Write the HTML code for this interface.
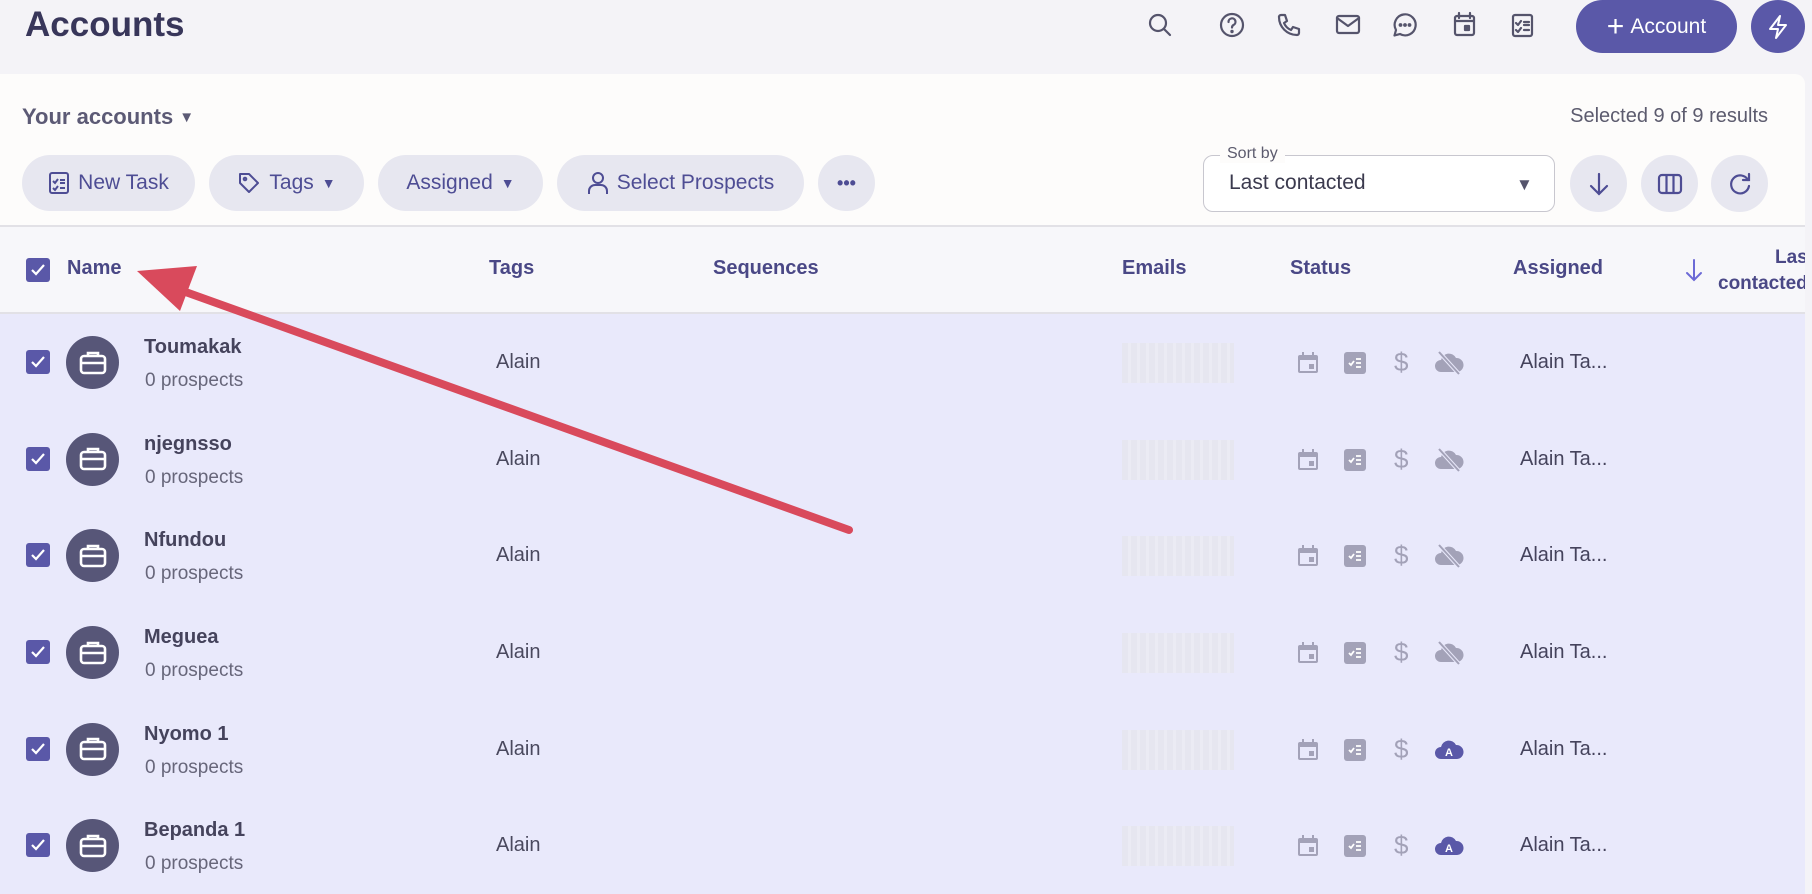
<!DOCTYPE html>
<html><head><meta charset="utf-8"><style>
*{margin:0;padding:0;box-sizing:border-box}
body{width:1812px;height:894px;overflow:hidden;background:#f4f3f7;font-family:"Liberation Sans",sans-serif;position:relative;color:#3d3b57}
.a{position:absolute}
.pill{position:absolute;top:155px;height:56px;border-radius:28px;background:#e7e7f0;color:#4e4d94;font-size:21px;display:flex;align-items:center;justify-content:center;gap:8px}
.circ{position:absolute;top:155px;width:57px;height:57px;border-radius:50%;background:#e7e7f0;display:flex;align-items:center;justify-content:center}
.th{position:absolute;top:257px;font-size:20px;font-weight:bold;color:#4a4886}
.cb{position:absolute;width:24px;height:24px;border-radius:3px;background:#5a58a8;display:flex;align-items:center;justify-content:center}
.row{position:absolute;left:0;width:1805px;height:97px;background:#e9e9fb}
.av{position:absolute;left:66px;top:22px;width:53px;height:53px;border-radius:50%;background:#575678;display:flex;align-items:center;justify-content:center}
.nm{position:absolute;left:144px;top:22px;font-size:20px;font-weight:bold;color:#45435c}
.pr{position:absolute;left:145px;top:56px;font-size:19px;color:#67667a}
.tg{position:absolute;left:496px;top:37px;font-size:20px;color:#4a495e}
.em{position:absolute;left:1122px;top:29px;width:112px;height:40px;background:repeating-linear-gradient(90deg,#e6e6f0 0 6px,#ebebf4 6px 9px)}
.st{position:absolute;top:37px}
.as{position:absolute;left:1520px;top:37px;font-size:20px;color:#45435c}
</style></head><body>
<div class="a" style="left:25px;top:5px;font-size:35px;font-weight:bold;color:#38365a">Accounts</div>
<svg class="a" style="left:1148px;top:11px" width="400" height="30" viewBox="0 0 400 30" fill="none" stroke="#55546c" stroke-width="2.2" stroke-linecap="round" stroke-linejoin="round">
<circle cx="10" cy="12" r="8"/><path d="M16 18l6 6"/>
<circle cx="84" cy="14" r="11"/><path d="M80.5 11a3.5 3.5 0 1 1 5 3c-1 .6-1.5 1.2-1.5 2.5"/><circle cx="84" cy="20.5" r=".6" fill="#55546c"/>
<path d="M133 4h4l2 6-3 2a13 13 0 0 0 7 7l2-3 6 2v4a2 2 0 0 1-2 2A18 18 0 0 1 131 6a2 2 0 0 1 2-2z"/>
<rect x="189" y="5" width="22" height="17" rx="2"/><path d="M189 7l11 8 11-8"/>
<path d="M252 23A10.5 10.5 0 1 0 248 19L246.5 24.5Z"/><circle cx="252.5" cy="14" r=".8" fill="#55546c"/><circle cx="257" cy="14" r=".8" fill="#55546c"/><circle cx="261.5" cy="14" r=".8" fill="#55546c"/>
<rect x="307" y="5" width="19" height="19" rx="2"/><path d="M307 10h19M311 2v5M322 2v5"/><rect x="317" y="15" width="4" height="4" fill="#55546c"/>
<rect x="365" y="4" width="19" height="21" rx="2"/><path d="M368 12l2 2 3-4M376 11h5M376 14h5M368 19l2 2 3-4M376 19h5"/>
</svg>
<div class="a" style="left:1576px;top:0;width:161px;height:53px;border-radius:27px;background:#5a58a8;color:#fff;font-size:21px;display:flex;align-items:center;justify-content:center;gap:6px"><span style="font-size:30px;font-weight:300;line-height:1">+</span>Account</div>
<div class="a" style="left:1751px;top:0;width:54px;height:53px;border-radius:50%;background:#5a58a8;display:flex;align-items:center;justify-content:center"><svg width="24" height="26" viewBox="0 0 24 26" fill="none" stroke="#fff" stroke-width="2" stroke-linejoin="round"><path d="M14 2L4 15h8l-2 9 10-13h-8z"/></svg></div>
<div class="a" style="left:0;top:74px;width:1805px;height:820px;background:#fdfcfb;border-top-right-radius:10px"></div>
<div class="a" style="left:22px;top:104px;font-size:22px;font-weight:bold;color:#5c5a75">Your accounts <span style="font-size:15px;vertical-align:2px">▼</span></div>
<div class="a" style="right:44px;top:105px;font-size:20px;color:#5c5b6e">Selected 9 of 9 results</div>
<div class="pill" style="left:22px;width:173px"><svg width="22" height="24" viewBox="0 0 22 24" fill="none" stroke="#4e4d94" stroke-width="2"><rect x="2" y="2" width="18" height="20" rx="2"/><path d="M5 10l2 2 3-4M12 9h5M12 12h5M5 17l2 2 3-4M12 17h5"/></svg>New Task</div>
<div class="pill" style="left:209px;width:155px"><svg width="24" height="24" viewBox="0 0 24 24" fill="none" stroke="#4e4d94" stroke-width="2" stroke-linejoin="round"><path d="M3 3h9l9 9-9 9-9-9z"/><circle cx="8" cy="8" r="1.3"/></svg>Tags <span style="font-size:14px">▼</span></div>
<div class="pill" style="left:378px;width:165px">Assigned <span style="font-size:14px">▼</span></div>
<div class="pill" style="left:557px;width:247px"><svg width="22" height="24" viewBox="0 0 22 24" fill="none" stroke="#4e4d94" stroke-width="2"><circle cx="11" cy="7" r="5"/><path d="M2 23v-3a6 6 0 0 1 6-6h6a6 6 0 0 1 6 6v3"/></svg>Select Prospects</div>
<div class="pill" style="left:818px;width:57px;font-weight:bold;font-size:18px">•••</div>
<div class="a" style="left:1203px;top:155px;width:352px;height:57px;border:1.5px solid #c8c7cf;border-radius:10px;background:#fff"></div>
<div class="a" style="left:1220px;top:145px;padding:0 7px;background:#fdfcfb;font-size:16px;color:#5c5b6e">Sort by</div>
<div class="a" style="left:1229px;top:171px;font-size:21px;color:#3b3a4e">Last contacted</div>
<div class="a" style="left:1516px;top:175px;font-size:17px;color:#55546c">▼</div>
<div class="circ" style="left:1570px"><svg width="24" height="26" viewBox="0 0 24 26" fill="none" stroke="#4e4d94" stroke-width="2.2" stroke-linecap="round"><path d="M12 3v20M4 15l8 8 8-8"/></svg></div>
<div class="circ" style="left:1641px"><svg width="26" height="24" viewBox="0 0 26 24" fill="none" stroke="#4e4d94" stroke-width="2.2"><rect x="2" y="3" width="22" height="18" rx="3"/><path d="M9.5 3v18M16.5 3v18"/></svg></div>
<div class="circ" style="left:1711px"><svg width="26" height="26" viewBox="0 0 26 26" fill="none" stroke="#4e4d94" stroke-width="2.2" stroke-linecap="round"><path d="M21 9a9 9 0 1 0 1 6"/><path d="M22 3v6h-6"/></svg></div>
<div class="a" style="left:0;top:225px;width:1805px;height:89px;background:#f7f7fa;border-top:2px solid #e2e1e6;border-bottom:2px solid #e2e1e6"></div>
<div class="cb" style="left:26px;top:258px"><svg width="16" height="14" viewBox="0 0 16 14" fill="none" stroke="#fff" stroke-width="2.2"><path d="M2 7l4 4 8-9"/></svg></div>
<div class="th" style="left:67px">Name</div>
<div class="th" style="left:489px">Tags</div>
<div class="th" style="left:713px">Sequences</div>
<div class="th" style="left:1122px">Emails</div>
<div class="th" style="left:1290px">Status</div>
<div class="th" style="left:1513px">Assigned</div>
<svg class="a" style="left:1684px;top:257px" width="20" height="26" viewBox="0 0 20 26" fill="none" stroke="#6c6ad6" stroke-width="2" stroke-linecap="round"><path d="M10 3v20M3 16l7 7 7-7"/></svg>
<div class="a" style="left:1718px;top:245px;font-size:19px;font-weight:bold;color:#4a4886;text-align:right;line-height:26px;white-space:nowrap">&nbsp;&nbsp;&nbsp;&nbsp;&nbsp;&nbsp;&nbsp;&nbsp;&nbsp;Las<br>contacted</div>
<div class="a" style="left:1805px;top:225px;width:7px;height:669px;background:#f4f3f7"></div>
<div id="rows"></div>
<svg width="0" height="0" style="position:absolute"><defs>
<g id="bag"><rect x="3" y="8" width="24" height="17" rx="3" fill="none" stroke="#fff" stroke-width="2.6"/><path d="M10 8V5h10v3M3 15h24" fill="none" stroke="#fff" stroke-width="2.6"/></g>
<g id="cal"><rect x="1" y="4" width="20" height="18" rx="2" fill="#a3a2b8"/><rect x="3" y="9" width="16" height="11" fill="#e9e9fb"/><rect x="12" y="13" width="5" height="5" fill="#a3a2b8"/><rect x="5" y="1" width="2" height="5" fill="#a3a2b8"/><rect x="15" y="1" width="2" height="5" fill="#a3a2b8"/></g>
<g id="task"><rect x="1" y="1" width="22" height="22" rx="3" fill="#a3a2b8"/><path d="M6 12l2 2 3-4M13 8h5M13 12h5M13 16h5" stroke="#fff" stroke-width="1.8" fill="none"/></g>
</defs></svg>
<script>
var names=["Toumakak","njegnsso","Nfundou","Meguea","Nyomo 1","Bepanda 1"],h="";
for(var i=0;i<6;i++){var t=314+i*96.67;
var cloud=i<4?'<svg width="30" height="26" viewBox="0 0 30 26"><path d="M7 22a6 6 0 0 1 0-12 8 8 0 0 1 15-2 6 6 0 0 1 1 14z" fill="#a3a2b8"/><path d="M5 2l20 22" stroke="#e9e9fb" stroke-width="4"/><path d="M5 2l20 22" stroke="#a3a2b8" stroke-width="2"/></svg>':'<svg width="30" height="26" viewBox="0 0 30 26"><path d="M7 22a6 6 0 0 1 0-12 8 8 0 0 1 15-2 6 6 0 0 1 1 14z" fill="#5a58a8"/><text x="15" y="19" font-size="11" font-weight="bold" fill="#fff" text-anchor="middle" font-family="Liberation Sans">A</text></svg>';
h+='<div class="row" style="top:'+t+'px"><div class="cb" style="left:26px;top:36px"><svg width="16" height="14" viewBox="0 0 16 14" fill="none" stroke="#fff" stroke-width="2.2"><path d="M2 7l4 4 8-9"/></svg></div>'+
'<div class="av"><svg width="30" height="30" viewBox="0 0 30 30"><use href="#bag"/></svg></div>'+
'<div class="nm">'+names[i]+'</div><div class="pr">0 prospects</div><div class="tg">Alain</div><div class="em"></div>'+
'<svg class="st" style="left:1297px" width="22" height="24" viewBox="0 0 22 24"><use href="#cal"/></svg>'+
'<svg class="st" style="left:1343px" width="24" height="24" viewBox="0 0 24 24"><use href="#task"/></svg>'+
'<div class="st" style="left:1394px;top:33px;font-size:26px;color:#a3a2b8">$</div>'+
'<div class="st" style="left:1434px;top:36px">'+cloud+'</div>'+
'<div class="as">Alain Ta...</div></div>';}
document.getElementById("rows").innerHTML=h;
</script>
<svg class="a" style="left:0;top:0" width="1812" height="894" viewBox="0 0 1812 894">
<path d="M849 530L180 290" stroke="#d94a5c" stroke-width="8" stroke-linecap="round"/>
<path d="M137 271L197 266L180 311z" fill="#d94a5c"/>
</svg>
</body></html>
